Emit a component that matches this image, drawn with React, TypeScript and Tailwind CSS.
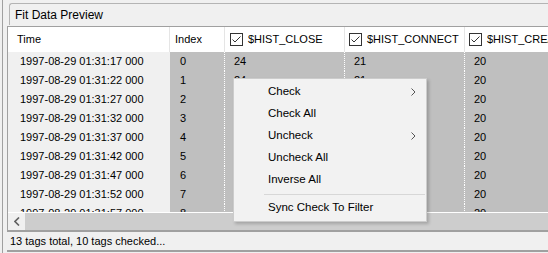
const rows = [
  { t: "1997-08-29 01:31:17 000", i: 0, a: "24", b: "21", c: "20" },
  { t: "1997-08-29 01:31:22 000", i: 1, a: "24", b: "21", c: "20" },
  { t: "1997-08-29 01:31:27 000", i: 2, a: "24", b: "21", c: "20" },
  { t: "1997-08-29 01:31:32 000", i: 3, a: "24", b: "21", c: "20" },
  { t: "1997-08-29 01:31:37 000", i: 4, a: "24", b: "21", c: "20" },
  { t: "1997-08-29 01:31:42 000", i: 5, a: "24", b: "21", c: "20" },
  { t: "1997-08-29 01:31:47 000", i: 6, a: "24", b: "21", c: "20" },
  { t: "1997-08-29 01:31:52 000", i: 7, a: "24", b: "21", c: "20" },
  { t: "1997-08-29 01:31:57 000", i: 8, a: "24", b: "21", c: "20" },
];

function Box() {
  return (
    <span className="inline-flex h-[13px] w-[13px] shrink-0 items-center justify-center border border-[#333333] bg-white">
      <svg width="11" height="11" viewBox="0 0 11 11">
        <polyline points="1.5,5.5 4,8 9.5,2.5" fill="none" stroke="#333" strokeWidth="1" />
      </svg>
    </span>
  );
}

function Arrow() {
  return (
    <svg width="5" height="8" viewBox="0 0 5 8" className="absolute right-[10px] top-[7px]">
      <polyline points="0.5,0.5 4,4 0.5,7.5" fill="none" stroke="#555" strokeWidth="1" />
    </svg>
  );
}

const items = [
  { label: "Check", sub: true },
  { label: "Check All" },
  { label: "Uncheck", sub: true },
  { label: "Uncheck All" },
  { label: "Inverse All" },
];

export default function App() {
  return (
    <div
      className="relative flex h-[253px] w-[548px] overflow-hidden bg-[#f0f0f0] text-[11px] text-black"
      style={{ fontFamily: '"Liberation Sans", Arial, sans-serif' }}
    >
      {/* splitter strip */}
      <div className="flex w-[7px] shrink-0">
        <div className="ml-[2px] h-full w-px bg-[#a0a0a0]" />
      </div>

      <div className="flex min-w-0 flex-1 flex-col">
        <div className="ml-[2px] mt-[3px] flex h-[22px] items-center rounded-tl-[3px] border-l border-t border-[#b4b4b4] pl-[5px] text-[12px]">
          Fit Data Preview
        </div>

        <div className="mt-px flex h-[204px] flex-col overflow-hidden border-l border-t border-[#a0a0a0]">
          {/* header */}
          <div className="flex h-[25px] shrink-0 items-center bg-white">
            <div className="flex h-full w-[162px] items-center border-r border-[#e5e5e5] pl-[9px]">Time</div>
            <div className="flex h-full w-[55px] items-center border-r border-[#e5e5e5] pl-[5px]">Index</div>
            <div className="flex h-full w-[120px] items-center gap-[5px] border-r border-[#e5e5e5] pl-[5px]">
              <Box />
              <span>$HIST_CLOSE</span>
            </div>
            <div className="flex h-full w-[120px] items-center gap-[5px] border-r border-[#e5e5e5] pl-[4px]">
              <Box />
              <span>$HIST_CONNECT</span>
            </div>
            <div className="flex h-full flex-1 items-center gap-[5px] overflow-hidden whitespace-nowrap pl-[4px]">
              <Box />
              <span>$HIST_CREATE</span>
            </div>
          </div>

          {/* rows */}
          <div className="h-[160px] overflow-hidden">
            {rows.map((r) => (
              <div key={r.i} className="flex h-[19px] items-center">
                <div className="flex h-full w-[162px] items-center pl-[12px]">{r.t}</div>
                <div className="flex h-full w-[55px] items-center border-r border-dotted border-white bg-[#bfbfbf] pl-[10px]">
                  {r.i}
                </div>
                <div className="flex h-full w-[120px] items-center border-r border-dotted border-white bg-[#bfbfbf] pl-[9px]">
                  {r.a}
                </div>
                <div className="flex h-full w-[120px] items-center border-r border-dotted border-white bg-[#bfbfbf] pl-[9px]">
                  {r.b}
                </div>
                <div className="flex h-full flex-1 items-center bg-[#bfbfbf] pl-[9px]">{r.c}</div>
              </div>
            ))}
          </div>

          {/* horizontal scrollbar */}
          <div className="flex h-[18px] shrink-0 border-t border-white">
            <div className="flex w-[17px] items-center justify-center bg-[#f0f0f0]">
              <svg width="6" height="9" viewBox="0 0 6 9">
                <polyline points="5,0.5 1,4.5 5,8.5" fill="none" stroke="#606060" strokeWidth="1.6" />
              </svg>
            </div>
            <div className="flex-1 bg-[#cdcdcd]" />
          </div>
        </div>

        {/* status bar */}
        <div className="flex h-[22px] items-center border-b-2 border-t-2 border-b-[#a0a0a0] border-t-[#a0a0a0] bg-[#f0f0f0] pl-[3px] text-[11px]">
          13 tags total, 10 tags checked...
        </div>
      </div>

      {/* context menu */}
      <div className="absolute left-[233px] top-[78px] w-[194px] border border-[#cccccc] bg-[#f2f2f2] py-[2px] text-[11.5px] shadow-[2px_2px_3px_rgba(0,0,0,0.2)]">
        {items.map((it) => (
          <div key={it.label} className="relative flex h-[22px] items-center pl-[34px]">
            {it.label}
            {it.sub && <Arrow />}
          </div>
        ))}
        <div className="flex h-[6px] items-center pl-[30px] pr-px">
          <div className="h-px w-full bg-[#d7d7d7]" />
        </div>
        <div className="flex h-[22px] items-center pl-[34px]">Sync Check To Filter</div>
      </div>
    </div>
  );
}
